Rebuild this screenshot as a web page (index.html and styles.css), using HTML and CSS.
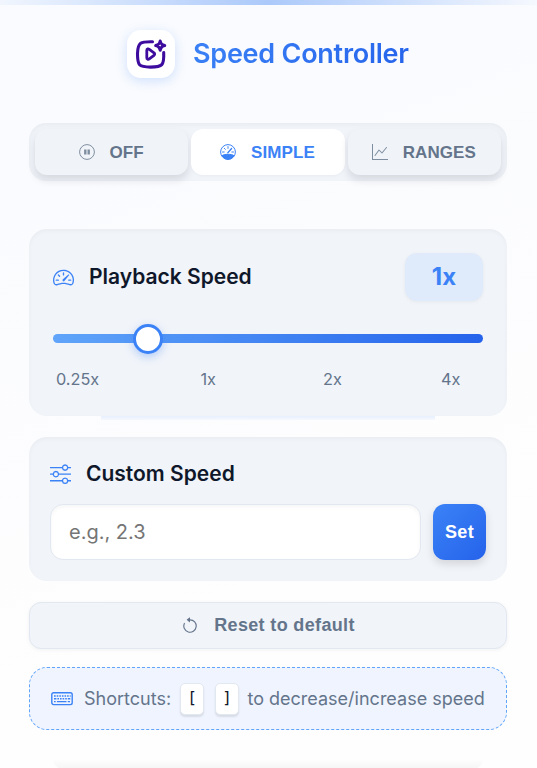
FILE: index.html
```
<!DOCTYPE html>
<html lang="en">
<head>
<meta charset="utf-8">
<title>Speed Controller</title>
<link rel="stylesheet" href="styles.css">
</head>
<body>
<div class="popup">
  <header class="header">
    <div class="logo">
      <svg width="32" height="32" viewBox="0 0 32 32" fill="none" stroke="#3d0c9f" stroke-width="3.1" stroke-linecap="round" stroke-linejoin="round">
        <path d="M17.500 3.700C5.500 3.400 2.900 4.500 2.500 15.500c0 12 1.200 13.600 13 13.600 12 0 13.700-1.800 13.200-14.500"/>
        <path d="M11.800 12.300c0-1.600 1.400-1.800 2.500-1l4.700 3.500c.9.800.9 1.800 0 2.500l-4.700 3.500c-1.100.8-2.500.4-2.500-1z" stroke-width="2.800"/>
        <path d="M25.200 3c.7 3.100 1.500 3.800 4.500 4.600-3 .8-3.800 1.500-4.500 4.600-.7-3.100-1.500-3.800-4.500-4.600 3-.8 3.800-1.500 4.500-4.600z" stroke-width="3.1"/>
      </svg>
    </div>
    <h1 class="title">Speed Controller</h1>
  </header>

  <nav class="tabs">
    <button class="tab">
      <svg class="tab-icon" viewBox="0 0 16 16" fill="none" stroke="currentColor"><circle cx="8" cy="8" r="7.400"/><path d="M6.300 5.500v5M9.700 5.500v5" stroke-width="2.400"/></svg>
      <span>OFF</span>
    </button>
    <button class="tab tab-active">
      <svg class="tab-icon" viewBox="0 0 16 16" fill="none" stroke="currentColor"><circle cx="8" cy="8" r="7.400"/><path d="M1.800 11.800c1.500-1.100 3.800-1.500 6.200-1.500s4.700.4 6.200 1.500A7.200 7.200 0 0 1 8 15.300a7.200 7.200 0 0 1-6.200-3.500z" fill="currentColor"/><path d="M8 2.600v1.800M4.300 4.300l1 1M2.500 8h1.700M11.800 8h1.700" stroke-linecap="round"/><path d="M7.800 8.800l3.800-4.300" stroke-width="1.300" stroke-linecap="round"/></svg>
      <span>SIMPLE</span>
    </button>
    <button class="tab">
      <svg class="tab-icon" viewBox="0 0 16 16" fill="currentColor"><path d="M0 0h1v15h15v1H0zm14.817 3.113a.5.5 0 0 1 .07.704l-4.500 5.500a.5.5 0 0 1-.74.037L7.060 6.767l-3.656 5.027a.5.5 0 0 1-.808-.588l4-5.500a.5.5 0 0 1 .758-.06l2.609 2.610 4.150-5.073a.5.5 0 0 1 .704-.07"/></svg>
      <span>RANGES</span>
    </button>
  </nav>

  <section class="card playback">
    <div class="card-top">
      <h2 class="card-title">
        <svg class="card-icon" viewBox="0 0 16 16" fill="currentColor"><path d="M8 4a.5.5 0 0 1 .5.5V6a.5.5 0 0 1-1 0V4.500A.5.5 0 0 1 8 4M3.732 5.732a.5.5 0 0 1 .707 0l.915.914a.5.5 0 1 1-.708.708l-.914-.915a.5.5 0 0 1 0-.707M2 10a.5.5 0 0 1 .5-.5h1.586a.5.5 0 0 1 0 1H2.500A.5.5 0 0 1 2 10m9.500 0a.5.5 0 0 1 .5-.5h1.500a.5.5 0 0 1 0 1H12a.5.5 0 0 1-.5-.5m.754-4.246a.39.39 0 0 0-.527-.02L7.547 9.310a.91.91 0 1 0 1.302 1.258l3.434-4.297a.39.39 0 0 0-.029-.518z"/><path fill-rule="evenodd" d="M0 10a8 8 0 1 1 15.547 2.661c-.442 1.253-1.845 1.602-2.932 1.250C11.309 13.488 9.475 13 8 13c-1.474 0-3.310.488-4.615.911-1.087.352-2.490.003-2.932-1.250A8 8 0 0 1 0 10m8-7a7 7 0 0 0-6.603 9.329c.203.575.923.876 1.680.63C4.397 12.533 6.358 12 8 12s3.604.532 4.923.96c.757.245 1.477-.056 1.680-.631A7 7 0 0 0 8 3"/></svg>
        <span>Playback Speed</span>
      </h2>
      <div class="value">1x</div>
    </div>
    <div class="track"><div class="thumb"></div></div>
    <div class="marks"><span>0.25x</span><span>1x</span><span>2x</span><span>4x</span></div>
    <div class="glow"></div>
  </section>

  <section class="card custom">
    <h2 class="card-title">
      <svg class="card-icon" viewBox="0 0 16 16" fill="currentColor"><path fill-rule="evenodd" d="M11.500 2a1.500 1.500 0 1 0 0 3 1.500 1.500 0 0 0 0-3M9.050 3a2.500 2.500 0 0 1 4.900 0H16v1h-2.050a2.500 2.500 0 0 1-4.900 0H0V3zM4.500 7a1.500 1.500 0 1 0 0 3 1.500 1.500 0 0 0 0-3M2.050 8a2.500 2.500 0 0 1 4.900 0H16v1H6.950a2.500 2.500 0 0 1-4.900 0H0V8zm9.450 4a1.500 1.500 0 1 0 0 3 1.500 1.500 0 0 0 0-3m-2.450 1a2.500 2.500 0 0 1 4.900 0H16v1h-2.050a2.500 2.500 0 0 1-4.900 0H0v-1z"/></svg>
      <span>Custom Speed</span>
    </h2>
    <div class="row">
      <input class="field" type="text" placeholder="e.g., 2.3">
      <button class="set">Set</button>
    </div>
  </section>

  <button class="reset">
    <svg class="reset-icon" viewBox="0 0 16 16" fill="currentColor"><path d="M8 3a5 5 0 1 1-4.546 2.914.5.5 0 0 0-.908-.417A6 6 0 1 0 8 2z"/><path d="M8 4.466V.534a.25.25 0 0 0-.41-.192L5.230 2.308a.25.25 0 0 0 0 .384l2.360 1.966A.25.25 0 0 0 8 4.466"/></svg>
    <span>Reset to default</span>
  </button>

  <div class="shortcuts">
    <svg class="keyboard" viewBox="0 0 22 14" fill="none" stroke="currentColor"><rect x=".8" y=".8" width="20.400" height="11.800" rx="1.800" stroke-width="1.400"/><path d="M3 4h1.700m1 0h1.600m1 0h1.600m1 0h1.600m1 0h1.600m1 0h1.600m1 0h1M3 6.700h2.400m1 0h1.600m1 0h1.600m1 0h1.600m1 0h1.600m1 0h2.500M3 9.600h1.700m1.200 0h9.600m1.200 0h2.300" stroke-width="1.400"/></svg>
    <span class="label">Shortcuts:</span>
    <kbd class="key">[</kbd>
    <kbd class="key">]</kbd>
    <span class="hint">to decrease/increase speed</span>
  </div>

  <div class="footer"></div>
</div>
</body>
</html>
```
FILE: styles.css
```
* { box-sizing: border-box; }
body {
  margin: 0;
  font-family: Inter, "Liberation Sans", sans-serif;
  color: #0f172a;
  background: #fff;
}
.popup {
  height: 768px;
  overflow: hidden;
  padding: 0 30px 0 29px;
  display: flex;
  flex-direction: column;
  background: linear-gradient(90deg, #f1f6fe, #abc9fa 50%, #f5f8fe) top / 100% 5px no-repeat,
    linear-gradient(160deg, #f9fbfe, #fafbfe 20%, #fefefe 75%);
}
button { font-family: "Liberation Sans", Arial, sans-serif; border: 0; padding: 0; }
h1, h2 { margin: 0; }
svg { display: block; flex: none; }
.header {
  display: flex;
  align-items: center;
  gap: 18px;
  margin: 30px 0 45px 98px;
  height: 48px;
}
.logo {
  width: 48px;
  height: 48px;
  border-radius: 14px;
  background: #fff;
  display: grid;
  place-items: center;
  box-shadow: 0 3px 12px rgba(59, 130, 246, .22);
}
.title {
  font-size: 27px;
  line-height: 40px;
  font-weight: 600;
  letter-spacing: -.25px;
  background: linear-gradient(135deg, #3b82f6, #2563eb);
  background-clip: text;
  -webkit-background-clip: text;
  color: transparent;
}
.tabs {
  display: grid;
  grid-template-columns: repeat(3, 1fr);
  gap: 3px;
  height: 58px;
  padding: 6px;
  border-radius: 17px;
  background: #f1f4f9;
  box-shadow: inset 0 2px 5px rgba(0, 0, 0, .04);
  flex: none;
}
.tab {
  height: 46px;
  border-radius: 12px;
  display: flex;
  align-items: center;
  justify-content: center;
  gap: 15px;
  font-size: 17px;
  font-weight: 700;
  letter-spacing: .1px;
  color: #64748b;
  background: #f0f4f8;
  box-shadow: 0 5px 9px rgba(15, 23, 42, .12);
}
.tab span { padding: 1px 1px 0 0; }
.tab-active { background: #fff; color: #3b82f6; box-shadow: 0 1px 3px rgba(0, 0, 0, .04); }
.tab-icon { width: 16px; height: 16px; opacity: .8; }
.tab-active .tab-icon { opacity: 1; }
.card {
  position: relative;
  border-radius: 18px;
  background: #f1f4f9;
  box-shadow: inset 0 2px 4px rgba(0, 0, 0, .035);
  flex: none;
}
.playback { margin-top: 48px; height: 187px; padding: 24px 24px 0; }
.card-top { display: flex; justify-content: space-between; align-items: center; height: 48px; }
.card-title { display: flex; align-items: center; gap: 15px; font-size: 21px; line-height: 28px; font-weight: 600; }
.card-icon { width: 21px; height: 21px; color: #3b82f6; }
.value {
  width: 78px;
  height: 48px;
  border-radius: 12px;
  background: #dfeafa;
  color: #3b82f6;
  font-size: 24px;
  font-weight: 700;
  line-height: 48px;
  text-align: center;
  box-shadow: 0 1px 4px rgba(0, 0, 0, .05);
}
.track {
  height: 9px;
  margin-top: 33px;
  border-radius: 5px;
  background: linear-gradient(90deg, #60a5fa, #2563eb);
  display: flex;
  align-items: center;
  padding-left: 80px;
}
.thumb {
  width: 30px;
  height: 30px;
  flex: none;
  border: 3px solid #3b82f6;
  border-radius: 50%;
  background: #fff;
  box-shadow: 0 3px 8px rgba(59, 130, 246, .35);
}
.marks {
  display: grid;
  grid-template-columns: 144.500px 122.500px 118px auto;
  margin: 25px 0 0 3px;
  font-size: 16.300px;
  line-height: 22px;
  color: #64748b;
}
.glow {
  position: absolute;
  left: 15%;
  right: 15%;
  top: 100%;
  height: 4px;
  background: linear-gradient(#e8f0fe, #f5f8fe);
}
.custom { margin-top: 21px; height: 144px; padding: 21px 21px 0; }
.custom .card-title { height: 30px; }
.custom .card-title span { padding-top: 2px; }
.row { display: flex; gap: 12px; margin-top: 16px; }
.field {
  flex: 1;
  min-width: 0;
  height: 56px;
  padding: 0 18px;
  border: 1px solid #e2e8f0;
  border-radius: 13px;
  background: #fff;
  box-shadow: inset 0 2px 4px rgba(0, 0, 0, .04);
  font: 20px Inter, sans-serif;
}
.field::placeholder { color: #757575; }
.set {
  width: 53px;
  height: 56px;
  border-radius: 12px;
  color: #fff;
  font-size: 18px;
  font-weight: 700;
  letter-spacing: .3px;
  background: linear-gradient(135deg, #3b82f6, #2563eb);
  box-shadow: 0 4px 9px rgba(0, 0, 0, .13);
}
.reset {
  height: 47px;
  flex: none;
  margin-top: 21px;
  border: 1px solid #e2e8f0;
  border-radius: 12px;
  background: #f1f4f9;
  color: #64748b;
  display: flex;
  align-items: center;
  justify-content: center;
  gap: 15px;
  font-size: 18px;
  font-weight: 700;
  letter-spacing: .35px;
  box-shadow: 0 1px 4px rgba(0, 0, 0, .05);
}
.reset-icon { width: 18px; height: 18px; }
.shortcuts {
  height: 63px;
  flex: none;
  margin-top: 18px;
  padding-left: 21px;
  border: 1px dashed #60a5fa;
  border-radius: 18px;
  background: #eff4fe;
  color: #64748b;
  display: flex;
  align-items: center;
  font-size: 18px;
  white-space: nowrap;
}
.keyboard { width: 22px; height: 14px; color: #3b82f6; }
.label { width: 88px; margin: 0 8px 0 11px; }
.key {
  width: 24px;
  height: 32px;
  margin-right: 11px;
  border: 1px solid #e2e8f0;
  border-radius: 5px;
  background: #fff;
  color: #0f172a;
  font: 16px/28px "DejaVu Sans Mono", monospace;
  text-align: center;
  box-shadow: 0 2px 2px rgba(0, 0, 0, .1);
}
.hint { margin-left: -2.500px; }
.footer {
  flex: none;
  height: 10px;
  margin: 29px 24px 0;
  border-radius: 0 0 18px 18px;
  background: linear-gradient(#fefefe, #f5f5f5);
}
```
